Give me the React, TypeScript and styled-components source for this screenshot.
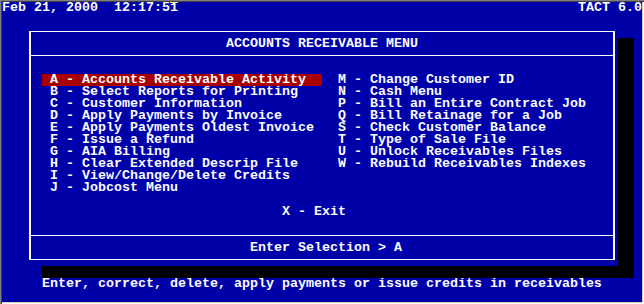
import styled, { createGlobalStyle } from "styled-components";

// 80x25 text screen, 8x12 character cells
const CELL = 8;
const ROW = 12;

// horizontal offset from the box's inner edge (col 3 + 5px of line) to a column
const fromCol = (col: number) => (col - 3) * CELL - 5;

const GlobalStyle = createGlobalStyle`
  html, body {
    margin: 0;
    padding: 0;
    background: #d4d0c8;
  }
`;

const Screen = styled.div`
  width: 644px;
  height: 304px;
  box-sizing: border-box;
  padding: 2px;
  display: flex;
  flex-direction: column;
  background: #0000a8;
  color: #fcfcfc;
  font: bold 13.333px/12px "Liberation Mono", "DejaVu Sans Mono", monospace;
  white-space: pre;
  box-shadow: inset 1px 1px #808080, inset 2px 2px #404040,
    inset -1px -1px #ffffff, inset -2px -2px #d4d0c8;
`;

const TopBar = styled.div`
  height: ${ROW}px;
  display: flex;
  justify-content: space-between;
`;

const Cursor = styled.span`
  display: inline-block;
  height: ${ROW}px;
  vertical-align: top;
  box-shadow: inset 0 1px #fcfc54;
`;

const Blank = styled.div<{ $rows?: number }>`
  height: ${({ $rows = 1 }) => $rows * ROW}px;
  flex: none;
`;

const Frame = styled.div`
  flex: none;
  margin-left: ${3 * CELL}px;
  width: ${74 * CELL}px;
  height: ${20 * ROW}px;
  box-sizing: border-box;
  padding: 5px 3px 6px;
  background: #0000a8;
  box-shadow: ${2 * CELL}px ${ROW}px 0 #000;
`;

const Box = styled.div`
  height: 100%;
  box-sizing: border-box;
  display: flex;
  flex-direction: column;
  border-style: solid;
  border-color: #fcfcfc;
  border-width: 1px 2px;
`;

const Title = styled.div`
  padding: 6px 0 5px;
  border-bottom: 1px solid #fcfcfc;
  text-align: center;
`;

const Body = styled.div`
  flex: 1;
  padding: 6px 0 5px;
`;

const Footer = styled.div`
  padding: 6px 0 5px;
  border-top: 1px solid #fcfcfc;
`;

const Items = styled.div`
  padding-left: ${fromCol(5)}px;
  display: grid;
  grid-template-columns: ${35 * CELL}px auto;
  grid-template-rows: repeat(10, ${ROW}px);
  grid-auto-flow: column;
  column-gap: ${2 * CELL}px;
`;

const Item = styled.div<{ $active?: boolean; $lead?: boolean }>`
  padding-left: ${({ $lead }) => ($lead ? CELL : 0)}px;
  background: ${({ $active }) => ($active ? "#a80000" : "transparent")};
`;

const Line = styled.div<{ $col: number }>`
  height: ${ROW}px;
  padding-left: ${({ $col }) => fromCol($col)}px;
`;

const Status = styled.div`
  height: ${ROW}px;
  padding-left: ${5 * CELL}px;
`;

const left: [string, string][] = [
  ["A", "Accounts Receivable Activity"],
  ["B", "Select Reports for Printing"],
  ["C", "Customer Information"],
  ["D", "Apply Payments by Invoice"],
  ["E", "Apply Payments Oldest Invoice"],
  ["F", "Issue a Refund"],
  ["G", "AIA Billing"],
  ["H", "Clear Extended Descrip File"],
  ["I", "View/Change/Delete Credits"],
  ["J", "Jobcost Menu"],
];

const right: [string, string][] = [
  ["M", "Change Customer ID"],
  ["N", "Cash Menu"],
  ["P", "Bill an Entire Contract Job"],
  ["Q", "Bill Retainage for a Job"],
  ["S", "Check Customer Balance"],
  ["T", "Type of Sale File"],
  ["U", "Unlock Receivables Files"],
  ["W", "Rebuild Receivables Indexes"],
];

const selected = "A";

export default function App() {
  return (
    <>
      <GlobalStyle />
      <Screen>
        <TopBar>
          <span>
            Feb 21, 2000  12:17:5<Cursor>1</Cursor>
          </span>
          <span>TACT 6.0</span>
        </TopBar>
        <Blank />
        <Frame>
          <Box>
            <Title>ACCOUNTS RECEIVABLE MENU</Title>
            <Body>
              <Blank />
              <Items>
                {left.map(([key, label]) => (
                  <Item key={key} $lead $active={key === selected}>
                    {key} - {label}
                  </Item>
                ))}
                {right.map(([key, label]) => (
                  <Item key={key}>
                    {key} - {label}
                  </Item>
                ))}
              </Items>
              <Blank />
              <Line $col={35}>X - Exit</Line>
              <Blank />
            </Body>
            <Footer>
              <Line $col={31}>Enter Selection &gt; {selected}</Line>
            </Footer>
          </Box>
        </Frame>
        <Blank />
        <Status>
          Enter, correct, delete, apply payments or issue credits in receivables
        </Status>
      </Screen>
    </>
  );
}
